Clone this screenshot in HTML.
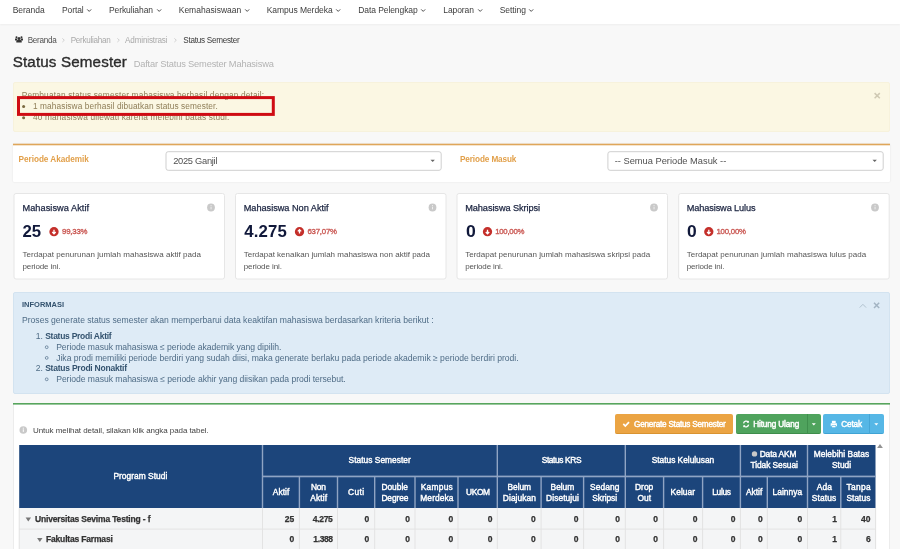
<!DOCTYPE html>
<html><head><meta charset="utf-8">
<style>
*{box-sizing:border-box;margin:0;padding:0}
html,body{width:900px;height:549px;overflow:hidden}
body{background:#f8f8f8;font-family:"Liberation Sans",sans-serif;position:relative}
.t{position:absolute;white-space:nowrap}
.b{position:absolute}
svg{position:absolute;overflow:visible}
#wrap{background:#f8f8f8;position:absolute;left:0;top:0;width:900px;height:549px;overflow:hidden;will-change:transform}
</style></head><body><div id="wrap">
<div class="b" style="left:0px;top:0px;width:900px;height:24px;background:#fff;box-shadow:0 1px 2px rgba(0,0,0,.045)"></div>
<div class="t" style="left:12.70px;top:5.00px;font-size:8.5px;line-height:10px;letter-spacing:-0.025px;color:#3c3c3c;font-weight:400;">Beranda</div>
<div class="t" style="left:62.00px;top:5.00px;font-size:8.5px;line-height:10px;letter-spacing:-0.101px;color:#3c3c3c;font-weight:400;">Portal</div>
<div class="t" style="left:109.00px;top:5.00px;font-size:8.5px;line-height:10px;letter-spacing:-0.090px;color:#3c3c3c;font-weight:400;">Perkuliahan</div>
<div class="t" style="left:178.70px;top:5.00px;font-size:8.5px;line-height:10px;letter-spacing:0.019px;color:#3c3c3c;font-weight:400;">Kemahasiswaan</div>
<div class="t" style="left:266.70px;top:5.00px;font-size:8.5px;line-height:10px;letter-spacing:-0.048px;color:#3c3c3c;font-weight:400;">Kampus Merdeka</div>
<div class="t" style="left:358.30px;top:5.00px;font-size:8.5px;line-height:10px;letter-spacing:-0.085px;color:#3c3c3c;font-weight:400;">Data Pelengkap</div>
<div class="t" style="left:443.30px;top:5.00px;font-size:8.5px;line-height:10px;letter-spacing:-0.083px;color:#3c3c3c;font-weight:400;">Laporan</div>
<div class="t" style="left:499.70px;top:5.00px;font-size:8.5px;line-height:10px;letter-spacing:-0.026px;color:#3c3c3c;font-weight:400;">Setting</div>
<svg style="left:86.8px;top:9.1px" width="4.4" height="3"><path d="M0.2 0.4 L2.2 2.4 L4.2 0.4" fill="none" stroke="#444" stroke-width="0.95"/></svg>
<svg style="left:156.8px;top:9.1px" width="4.4" height="3"><path d="M0.2 0.4 L2.2 2.4 L4.2 0.4" fill="none" stroke="#444" stroke-width="0.95"/></svg>
<svg style="left:244.8px;top:9.1px" width="4.4" height="3"><path d="M0.2 0.4 L2.2 2.4 L4.2 0.4" fill="none" stroke="#444" stroke-width="0.95"/></svg>
<svg style="left:335.8px;top:9.1px" width="4.4" height="3"><path d="M0.2 0.4 L2.2 2.4 L4.2 0.4" fill="none" stroke="#444" stroke-width="0.95"/></svg>
<svg style="left:421.1px;top:9.1px" width="4.4" height="3"><path d="M0.2 0.4 L2.2 2.4 L4.2 0.4" fill="none" stroke="#444" stroke-width="0.95"/></svg>
<svg style="left:477.5px;top:9.1px" width="4.4" height="3"><path d="M0.2 0.4 L2.2 2.4 L4.2 0.4" fill="none" stroke="#444" stroke-width="0.95"/></svg>
<svg style="left:529.0999999999999px;top:9.1px" width="4.4" height="3"><path d="M0.2 0.4 L2.2 2.4 L4.2 0.4" fill="none" stroke="#444" stroke-width="0.95"/></svg>
<svg style="left:15.2px;top:36.2px" width="8" height="7" viewBox="0 0 8 7"><g fill="#333"><circle cx="1.5" cy="1.3" r="1"/><circle cx="6.5" cy="1.3" r="1"/><circle cx="4" cy="2.4" r="1.5"/><path d="M0 2.6h2.2v2H0.6Q0 4.6 0 4z"/><path d="M8 2.6h-2.2v2h1.6Q8 4.6 8 4z"/><path d="M1.3 6.6V5.4Q1.3 4.1 2.6 4.1h2.8Q6.7 4.1 6.7 5.4v1.2z"/></g></svg>
<div class="t" style="left:27.70px;top:36.00px;font-size:8.15px;line-height:9px;letter-spacing:-0.255px;color:#505050;font-weight:400;">Beranda</div>
<div class="t" style="left:70.70px;top:36.00px;font-size:8.15px;line-height:9px;letter-spacing:-0.275px;color:#a9a9a9;font-weight:400;">Perkuliahan</div>
<div class="t" style="left:125.00px;top:36.00px;font-size:8.15px;line-height:9px;letter-spacing:-0.152px;color:#a9a9a9;font-weight:400;">Administrasi</div>
<div class="t" style="left:183.30px;top:36.00px;font-size:8.15px;line-height:9px;letter-spacing:-0.253px;color:#3a3a3a;font-weight:400;">Status Semester</div>
<svg style="left:62.4px;top:38.1px" width="3" height="5"><path d="M0.4 0.4 L2.3 2.2 L0.4 4" fill="none" stroke="#c2c2c2" stroke-width="0.75"/></svg>
<svg style="left:116.9px;top:38.1px" width="3" height="5"><path d="M0.4 0.4 L2.3 2.2 L0.4 4" fill="none" stroke="#c2c2c2" stroke-width="0.75"/></svg>
<svg style="left:173.9px;top:38.1px" width="3" height="5"><path d="M0.4 0.4 L2.3 2.2 L0.4 4" fill="none" stroke="#c2c2c2" stroke-width="0.75"/></svg>
<div class="t" style="left:12.70px;top:53.00px;font-size:15.2px;line-height:17px;letter-spacing:0.138px;color:#2c2c2c;font-weight:400;-webkit-text-stroke:.35px #2c2c2c;">Status Semester</div>
<div class="t" style="left:133.70px;top:59.00px;font-size:9.3px;line-height:10px;letter-spacing:-0.177px;color:#b3b3b3;font-weight:400;">Daftar Status Semester Mahasiswa</div>
<div class="b" style="left:13px;top:82px;width:877px;height:50px;background:#fbf7e3;border:1px solid #f7f2dc;border-radius:2px"></div>
<div class="t" style="left:21.80px;top:90.00px;font-size:8.3px;line-height:10px;letter-spacing:0.162px;color:#8e7d57;font-weight:400;">Pembuatan status semester mahasiswa berhasil dengan detail:</div>
<div class="t" style="left:33.00px;top:101.00px;font-size:8.3px;line-height:10px;letter-spacing:0.086px;color:#8e7d57;font-weight:400;">1 mahasiswa berhasil dibuatkan status semester.</div>
<div class="t" style="left:33.00px;top:112.00px;font-size:8.3px;line-height:10px;letter-spacing:0.157px;color:#8e7d57;font-weight:400;">40 mahasiswa dilewati karena melebihi batas studi.</div>
<svg style="left:0;top:0" width="900" height="140"><circle cx="23.6" cy="106.4" r="1.5" fill="#7a6940"/><circle cx="23.6" cy="117.7" r="1.5" fill="#7a6940"/><path d="M874.6 93.1l5.2 5.2m0-5.2l-5.2 5.2" stroke="#cfc9b3" stroke-width="1.5" fill="none"/><rect x="18.5" y="97.6" width="254.8" height="16.8" fill="none" stroke="#cf0c13" stroke-width="3"/></svg>
<div class="b" style="left:13px;top:144px;width:877px;height:37.5px;background:#fff;box-shadow:0 0 2px rgba(0,0,0,.10);border-radius:1px"></div>
<svg style="left:0;top:0" width="900" height="150"><rect x="13" y="143.7" width="877" height="1.6" fill="#dfa65a"/></svg>
<div class="t" style="left:18.50px;top:155.00px;font-size:8.2px;line-height:9px;letter-spacing:-0.020px;color:#e2a04a;font-weight:700;">Periode Akademik</div>
<div class="t" style="left:460.00px;top:155.00px;font-size:8.2px;line-height:9px;letter-spacing:-0.116px;color:#e2a04a;font-weight:700;">Periode Masuk</div>
<svg style="left:0;top:0" width="900" height="180"><rect x="166.0" y="151.7" width="275.2" height="18.6" rx="2.2" fill="#fff" stroke="#cfcfcf" stroke-width="1"/><path d="M430.5 159.7h4.4l-2.2 2.3z" fill="#666"/></svg>
<svg style="left:0;top:0" width="900" height="180"><rect x="607.9" y="151.7" width="275.30000000000007" height="18.6" rx="2.2" fill="#fff" stroke="#cfcfcf" stroke-width="1"/><path d="M872.5 159.7h4.4l-2.2 2.3z" fill="#666"/></svg>
<div class="t" style="left:173.20px;top:156.00px;font-size:9.3px;line-height:10px;letter-spacing:-0.276px;color:#505050;font-weight:400;">2025 Ganjil</div>
<div class="t" style="left:614.70px;top:156.00px;font-size:9.3px;line-height:10px;letter-spacing:-0.002px;color:#505050;font-weight:400;">-- Semua Periode Masuk --</div>
<svg style="left:0;top:0" width="900" height="285"><rect x="14.0" y="193.5" width="210.5" height="85.5" rx="2" fill="#fff" stroke="#e6e6e6" stroke-width="1"/><circle cx="211" cy="207.5" r="3.9" fill="#c9c9c9"/><rect x="210.6" y="206.7" width=".9" height="2.6" fill="#f2f2f2"/><rect x="210.6" y="205.1" width=".9" height=".9" fill="#f2f2f2"/><circle cx="54.0" cy="231.7" r="4.65" fill="#c42f2a"/><path d="M54.0 229.8v3.4M52.300000000000004 232l1.7 1.8l1.7 -1.8" stroke="#fff" stroke-width="1.3" fill="none"/></svg>
<div class="t" style="left:22.50px;top:203.00px;font-size:9.2px;line-height:10px;letter-spacing:0.051px;color:#1b2440;font-weight:400;-webkit-text-stroke:.25px #1b2440;">Mahasiswa Aktif</div>
<div class="t" style="left:22.51px;top:222.00px;font-size:16.8px;line-height:19px;letter-spacing:0.000px;color:#10183a;font-weight:700;">25</div>
<div class="t" style="left:62.00px;top:227.00px;font-size:7.8px;line-height:9px;letter-spacing:-0.192px;color:#cb5b56;font-weight:400;-webkit-text-stroke:.35px #cb5b56;">99,33%</div>
<div class="t" style="left:22.50px;top:250.00px;font-size:8.0px;line-height:9px;letter-spacing:0.043px;color:#555;font-weight:400;">Terdapat penurunan jumlah mahasiswa aktif pada</div>
<div class="t" style="left:22.50px;top:262.00px;font-size:8.0px;line-height:9px;letter-spacing:-0.104px;color:#555;font-weight:400;">periode ini.</div>
<svg style="left:0;top:0" width="900" height="285"><rect x="235.5" y="193.5" width="210.5" height="85.5" rx="2" fill="#fff" stroke="#e6e6e6" stroke-width="1"/><circle cx="432.5" cy="207.5" r="3.9" fill="#c9c9c9"/><rect x="432.1" y="206.7" width=".9" height="2.6" fill="#f2f2f2"/><rect x="432.1" y="205.1" width=".9" height=".9" fill="#f2f2f2"/><circle cx="299.5" cy="231.7" r="4.65" fill="#c42f2a"/><path d="M299.5 230.2v3.4M297.8 231.4l1.7 -1.8l1.7 1.8" stroke="#fff" stroke-width="1.3" fill="none"/></svg>
<div class="t" style="left:243.70px;top:203.00px;font-size:9.2px;line-height:10px;letter-spacing:-0.023px;color:#1b2440;font-weight:400;-webkit-text-stroke:.25px #1b2440;">Mahasiswa Non Aktif</div>
<div class="t" style="left:244.20px;top:222.00px;font-size:16.8px;line-height:19px;letter-spacing:0.190px;color:#10183a;font-weight:700;">4.275</div>
<div class="t" style="left:307.50px;top:227.00px;font-size:7.8px;line-height:9px;letter-spacing:-0.215px;color:#cb5b56;font-weight:400;-webkit-text-stroke:.35px #cb5b56;">637,07%</div>
<div class="t" style="left:243.70px;top:250.00px;font-size:8.0px;line-height:9px;letter-spacing:0.008px;color:#555;font-weight:400;">Terdapat kenaikan jumlah mahasiswa non aktif pada</div>
<div class="t" style="left:243.70px;top:262.00px;font-size:8.0px;line-height:9px;letter-spacing:-0.076px;color:#555;font-weight:400;">periode ini.</div>
<svg style="left:0;top:0" width="900" height="285"><rect x="457.0" y="193.5" width="210.5" height="85.5" rx="2" fill="#fff" stroke="#e6e6e6" stroke-width="1"/><circle cx="654" cy="207.5" r="3.9" fill="#c9c9c9"/><rect x="653.6" y="206.7" width=".9" height="2.6" fill="#f2f2f2"/><rect x="653.6" y="205.1" width=".9" height=".9" fill="#f2f2f2"/><circle cx="487.5" cy="231.7" r="4.65" fill="#c42f2a"/><path d="M487.5 229.8v3.4M485.8 232l1.7 1.8l1.7 -1.8" stroke="#fff" stroke-width="1.3" fill="none"/></svg>
<div class="t" style="left:465.20px;top:203.00px;font-size:9.2px;line-height:10px;letter-spacing:-0.073px;color:#1b2440;font-weight:400;-webkit-text-stroke:.25px #1b2440;">Mahasiswa Skripsi</div>
<div class="t" style="left:465.70px;top:222.00px;font-size:16.8px;line-height:19px;letter-spacing:0.000px;color:#10183a;font-weight:700;transform:scaleX(1.051);transform-origin:0 0;">0</div>
<div class="t" style="left:495.20px;top:227.00px;font-size:7.8px;line-height:9px;letter-spacing:-0.248px;color:#cb5b56;font-weight:400;-webkit-text-stroke:.35px #cb5b56;">100,00%</div>
<div class="t" style="left:465.20px;top:250.00px;font-size:8.0px;line-height:9px;letter-spacing:0.009px;color:#555;font-weight:400;">Terdapat penurunan jumlah mahasiswa skripsi pada</div>
<div class="t" style="left:465.20px;top:262.00px;font-size:8.0px;line-height:9px;letter-spacing:-0.122px;color:#555;font-weight:400;">periode ini.</div>
<svg style="left:0;top:0" width="900" height="285"><rect x="678.7" y="193.5" width="210.5" height="85.5" rx="2" fill="#fff" stroke="#e6e6e6" stroke-width="1"/><circle cx="875" cy="207.5" r="3.9" fill="#c9c9c9"/><rect x="874.6" y="206.7" width=".9" height="2.6" fill="#f2f2f2"/><rect x="874.6" y="205.1" width=".9" height=".9" fill="#f2f2f2"/><circle cx="708.8" cy="231.7" r="4.65" fill="#c42f2a"/><path d="M708.8 229.8v3.4M707.1 232l1.7 1.8l1.7 -1.8" stroke="#fff" stroke-width="1.3" fill="none"/></svg>
<div class="t" style="left:686.70px;top:203.00px;font-size:9.2px;line-height:10px;letter-spacing:-0.112px;color:#1b2440;font-weight:400;-webkit-text-stroke:.25px #1b2440;">Mahasiswa Lulus</div>
<div class="t" style="left:687.00px;top:222.00px;font-size:16.8px;line-height:19px;letter-spacing:0.000px;color:#10183a;font-weight:700;transform:scaleX(1.040);transform-origin:0 0;">0</div>
<div class="t" style="left:716.50px;top:227.00px;font-size:7.8px;line-height:9px;letter-spacing:-0.215px;color:#cb5b56;font-weight:400;-webkit-text-stroke:.35px #cb5b56;">100,00%</div>
<div class="t" style="left:686.70px;top:250.00px;font-size:8.0px;line-height:9px;letter-spacing:0.025px;color:#555;font-weight:400;">Terdapat penurunan jumlah mahasiswa lulus pada</div>
<div class="t" style="left:686.70px;top:262.00px;font-size:8.0px;line-height:9px;letter-spacing:-0.122px;color:#555;font-weight:400;">periode ini.</div>
<div class="b" style="left:13px;top:292px;width:877px;height:102px;background:#deebf6;border:1px solid #d3e3f0;border-radius:2px"></div>
<div class="t" style="left:22.00px;top:300.00px;font-size:7.5px;line-height:9px;letter-spacing:-0.009px;color:#34536f;font-weight:700;">INFORMASI</div>
<div class="t" style="left:22.00px;top:315.00px;font-size:8.6px;line-height:10px;letter-spacing:-0.010px;color:#4f6c86;font-weight:400;">Proses generate status semester akan memperbarui data keaktifan mahasiswa berdasarkan kriteria berikut :</div>
<div class="t" style="left:35.82px;top:331.00px;font-size:8.6px;line-height:10px;letter-spacing:0.000px;color:#4f6c86;font-weight:400;">1.</div>
<div class="t" style="left:45.20px;top:331.00px;font-size:8.5px;line-height:10px;letter-spacing:-0.266px;color:#34536f;font-weight:700;">Status Prodi Aktif</div>
<div class="t" style="left:56.20px;top:342.00px;font-size:8.6px;line-height:10px;letter-spacing:-0.048px;color:#4f6c86;font-weight:400;">Periode masuk mahasiswa ≤ periode akademik yang dipilih.</div>
<div class="t" style="left:56.20px;top:353.00px;font-size:8.6px;line-height:10px;letter-spacing:-0.015px;color:#4f6c86;font-weight:400;">Jika prodi memiliki periode berdiri yang sudah diisi, maka generate berlaku pada periode akademik ≥ periode berdiri prodi.</div>
<div class="t" style="left:35.82px;top:363.00px;font-size:8.6px;line-height:10px;letter-spacing:0.000px;color:#4f6c86;font-weight:400;">2.</div>
<div class="t" style="left:45.20px;top:363.00px;font-size:8.5px;line-height:10px;letter-spacing:-0.232px;color:#34536f;font-weight:700;">Status Prodi Nonaktif</div>
<div class="t" style="left:56.20px;top:374.00px;font-size:8.6px;line-height:10px;letter-spacing:-0.044px;color:#4f6c86;font-weight:400;">Periode masuk mahasiswa ≤ periode akhir yang diisikan pada prodi tersebut.</div>
<svg style="left:0;top:0" width="900" height="400"><g fill="none" stroke="#4f6c86" stroke-width=".7"><circle cx="46.7" cy="347.2" r="1.4"/><circle cx="46.7" cy="357.9" r="1.4"/><circle cx="46.7" cy="379.3" r="1.4"/></g><path d="M859.7 307.6l3.2-3.3l3.2 3.3" stroke="#adbecc" stroke-width="0.9" fill="none"/><path d="M874 302.8l5.2 5.2m0-5.2l-5.2 5.2" stroke="#a3b4c3" stroke-width="1.5" fill="none"/></svg>
<div class="b" style="left:13px;top:403px;width:877px;height:157px;background:#fff;border:1px solid #ececec;border-top:0"></div>
<svg style="left:0;top:0" width="900" height="410"><rect x="13" y="403" width="877" height="1.6" fill="#57a55d"/></svg>
<svg style="left:0;top:0" width="900" height="440"><circle cx="23.3" cy="430" r="3.8" fill="#c9c9c9"/><rect x="22.8" y="429.3" width="1" height="2.6" fill="#fff"/><rect x="22.8" y="427.7" width="1" height="1" fill="#fff"/></svg>
<div class="t" style="left:33.00px;top:426.00px;font-size:8.0px;line-height:9px;letter-spacing:-0.069px;color:#444;font-weight:400;">Untuk melihat detail, silakan klik angka pada tabel.</div>
<div class="b" style="left:615px;top:414px;width:118px;height:20px;background:#eba443;border-bottom:1px solid #d99330;border-radius:2px"></div>
<div class="b" style="left:736px;top:414px;width:85px;height:20px;background:#4fa35d;border-bottom:1px solid #3e8d4b;border-radius:2px"></div>
<div class="b" style="left:806.5px;top:414px;width:1.0px;height:20px;background:#3f8f4d"></div>
<div class="b" style="left:823px;top:414px;width:61px;height:20px;background:#56b7e6;border-bottom:1px solid #3fa3d4;border-radius:2px"></div>
<div class="b" style="left:868.5px;top:414px;width:1.0px;height:20px;background:#45a6d6"></div>
<div class="t" style="left:634.00px;top:420.00px;font-size:8.2px;line-height:9px;letter-spacing:-0.226px;color:#fff;font-weight:400;-webkit-text-stroke:.45px #fff;">Generate Status Semester</div>
<div class="t" style="left:753.20px;top:420.00px;font-size:8.2px;line-height:9px;letter-spacing:-0.120px;color:#fff;font-weight:400;-webkit-text-stroke:.45px #fff;">Hitung Ulang</div>
<div class="t" style="left:841.20px;top:420.00px;font-size:8.2px;line-height:9px;letter-spacing:-0.111px;color:#fff;font-weight:400;-webkit-text-stroke:.45px #fff;">Cetak</div>
<svg style="left:0;top:0" width="900" height="440"><path d="M623.3 423.9l2 2.1l3.7 -3.9" stroke="#fff" stroke-width="1.7" fill="none"/><g fill="none" stroke="#fff" stroke-width="1.3"><path d="M743.6 423.4a2.6 2.6 0 0 1 4.7 -1.2"/><path d="M748.6 424.6a2.6 2.6 0 0 1 -4.7 1.2"/></g><path d="M748.9 420.6v2.2h-2.2zM743.3 427.4v-2.2h2.2z" fill="#fff"/><path d="M811.8 423.2h4l-2 2.2z" fill="#fff"/><path d="M874.3 423.2h4l-2 2.2z" fill="#fff"/><g fill="#fff"><rect x="831.9" y="420.8" width="3.8" height="2.2"/><path d="M830.7 423.3h6.2v3h-1v-1.2h-4.2v1.2h-1z"/><rect x="832.1" y="425.6" width="3.4" height="1.7"/></g></svg>
<svg style="left:0;top:0" width="900" height="549"><rect x="19.2" y="445" width="856.3" height="63" fill="#1c457b"/></svg>
<svg style="left:0;top:0" width="900" height="549"><rect x="261.8" y="445" width="1.4" height="63" fill="#8fa4c4"/><rect x="298.7" y="476.4" width="1.4" height="31.600000000000023" fill="#8fa4c4"/><rect x="336.8" y="476.4" width="1.4" height="31.600000000000023" fill="#8fa4c4"/><rect x="374.0" y="476.4" width="1.4" height="31.600000000000023" fill="#8fa4c4"/><rect x="414.3" y="476.4" width="1.4" height="31.600000000000023" fill="#8fa4c4"/><rect x="457.3" y="476.4" width="1.4" height="31.600000000000023" fill="#8fa4c4"/><rect x="496.6" y="445" width="1.4" height="63" fill="#8fa4c4"/><rect x="540.4" y="476.4" width="1.4" height="31.600000000000023" fill="#8fa4c4"/><rect x="582.9" y="476.4" width="1.4" height="31.600000000000023" fill="#8fa4c4"/><rect x="624.5999999999999" y="445" width="1.4" height="63" fill="#8fa4c4"/><rect x="662.9" y="476.4" width="1.4" height="31.600000000000023" fill="#8fa4c4"/><rect x="701.9" y="476.4" width="1.4" height="31.600000000000023" fill="#8fa4c4"/><rect x="739.6999999999999" y="445" width="1.4" height="63" fill="#8fa4c4"/><rect x="766.5999999999999" y="476.4" width="1.4" height="31.600000000000023" fill="#8fa4c4"/><rect x="806.8" y="445" width="1.4" height="63" fill="#8fa4c4"/><rect x="840.0999999999999" y="476.4" width="1.4" height="31.600000000000023" fill="#8fa4c4"/><rect x="262.5" y="475.6" width="613" height="1.7" fill="#8fa4c4"/><rect x="19" y="508" width="857" height="41" fill="#f4f5f6"/><rect x="18.7" y="508" width="1" height="41" fill="#e3e3e3"/><rect x="262.0" y="508" width="1" height="41" fill="#e3e3e3"/><rect x="298.9" y="508" width="1" height="41" fill="#e3e3e3"/><rect x="337.0" y="508" width="1" height="41" fill="#e3e3e3"/><rect x="374.2" y="508" width="1" height="41" fill="#e3e3e3"/><rect x="414.5" y="508" width="1" height="41" fill="#e3e3e3"/><rect x="457.5" y="508" width="1" height="41" fill="#e3e3e3"/><rect x="496.8" y="508" width="1" height="41" fill="#e3e3e3"/><rect x="540.6" y="508" width="1" height="41" fill="#e3e3e3"/><rect x="583.1" y="508" width="1" height="41" fill="#e3e3e3"/><rect x="624.8" y="508" width="1" height="41" fill="#e3e3e3"/><rect x="663.1" y="508" width="1" height="41" fill="#e3e3e3"/><rect x="702.1" y="508" width="1" height="41" fill="#e3e3e3"/><rect x="739.9" y="508" width="1" height="41" fill="#e3e3e3"/><rect x="766.8" y="508" width="1" height="41" fill="#e3e3e3"/><rect x="807.0" y="508" width="1" height="41" fill="#e3e3e3"/><rect x="840.3" y="508" width="1" height="41" fill="#e3e3e3"/><rect x="875.1" y="508" width="1" height="41" fill="#e3e3e3"/><rect x="19" y="528.6" width="857" height="1" fill="#e3e3e3"/><path d="M25.6 517.5h5.4l-2.7 4.1z" fill="#777"/><path d="M37.1 538h5.4l-2.7 4.1z" fill="#777"/><path d="M877.1 448h5.8l-2.9 -4.1z" fill="#929292"/><circle cx="754.5" cy="453.9" r="2.7" fill="#c9c9c9"/></svg>
<div class="t" style="left:113.40px;top:471.00px;font-size:8.4px;line-height:10px;letter-spacing:0.034px;color:#fff;font-weight:400;-webkit-text-stroke:.4px #fff;">Program Studi</div>
<div class="t" style="left:348.60px;top:455.00px;font-size:8.4px;line-height:10px;letter-spacing:0.022px;color:#fff;font-weight:400;-webkit-text-stroke:.4px #fff;">Status Semester</div>
<div class="t" style="left:541.70px;top:455.00px;font-size:8.4px;line-height:10px;letter-spacing:-0.381px;color:#fff;font-weight:400;-webkit-text-stroke:.4px #fff;">Status KRS</div>
<div class="t" style="left:651.70px;top:455.00px;font-size:8.4px;line-height:10px;letter-spacing:-0.023px;color:#fff;font-weight:400;-webkit-text-stroke:.4px #fff;">Status Kelulusan</div>
<div class="t" style="left:759.70px;top:449.00px;font-size:8.4px;line-height:10px;letter-spacing:-0.132px;color:#fff;font-weight:400;-webkit-text-stroke:.4px #fff;">Data AKM</div>
<div class="t" style="left:750.50px;top:460.00px;font-size:8.4px;line-height:10px;letter-spacing:-0.069px;color:#fff;font-weight:400;-webkit-text-stroke:.4px #fff;">Tidak Sesuai</div>
<div class="t" style="left:813.70px;top:449.00px;font-size:8.4px;line-height:10px;letter-spacing:0.038px;color:#fff;font-weight:400;-webkit-text-stroke:.4px #fff;">Melebihi Batas</div>
<div class="t" style="left:831.90px;top:460.00px;font-size:8.4px;line-height:10px;letter-spacing:0.037px;color:#fff;font-weight:400;-webkit-text-stroke:.4px #fff;">Studi</div>
<div class="t" style="left:272.80px;top:487.00px;font-size:8.4px;line-height:10px;letter-spacing:0.060px;color:#fff;font-weight:400;-webkit-text-stroke:.4px #fff;">Aktif</div>
<div class="t" style="left:311.00px;top:482.00px;font-size:8.4px;line-height:10px;letter-spacing:-0.207px;color:#fff;font-weight:400;-webkit-text-stroke:.4px #fff;">Non</div>
<div class="t" style="left:310.30px;top:493.00px;font-size:8.4px;line-height:10px;letter-spacing:0.135px;color:#fff;font-weight:400;-webkit-text-stroke:.4px #fff;">Aktif</div>
<div class="t" style="left:348.00px;top:487.00px;font-size:8.4px;line-height:10px;letter-spacing:0.423px;color:#fff;font-weight:400;-webkit-text-stroke:.4px #fff;">Cuti</div>
<div class="t" style="left:381.40px;top:482.00px;font-size:8.4px;line-height:10px;letter-spacing:-0.006px;color:#fff;font-weight:400;-webkit-text-stroke:.4px #fff;">Double</div>
<div class="t" style="left:381.40px;top:493.00px;font-size:8.4px;line-height:10px;letter-spacing:-0.070px;color:#fff;font-weight:400;-webkit-text-stroke:.4px #fff;">Degree</div>
<div class="t" style="left:420.80px;top:482.00px;font-size:8.4px;line-height:10px;letter-spacing:0.239px;color:#fff;font-weight:400;-webkit-text-stroke:.4px #fff;">Kampus</div>
<div class="t" style="left:420.30px;top:493.00px;font-size:8.4px;line-height:10px;letter-spacing:0.101px;color:#fff;font-weight:400;-webkit-text-stroke:.4px #fff;">Merdeka</div>
<div class="t" style="left:466.10px;top:487.00px;font-size:8.4px;line-height:10px;letter-spacing:-0.400px;color:#fff;font-weight:400;-webkit-text-stroke:.4px #fff;">UKOM</div>
<div class="t" style="left:507.50px;top:482.00px;font-size:8.4px;line-height:10px;letter-spacing:-0.053px;color:#fff;font-weight:400;-webkit-text-stroke:.4px #fff;">Belum</div>
<div class="t" style="left:502.80px;top:493.00px;font-size:8.4px;line-height:10px;letter-spacing:0.086px;color:#fff;font-weight:400;-webkit-text-stroke:.4px #fff;">Diajukan</div>
<div class="t" style="left:550.60px;top:482.00px;font-size:8.4px;line-height:10px;letter-spacing:-0.053px;color:#fff;font-weight:400;-webkit-text-stroke:.4px #fff;">Belum</div>
<div class="t" style="left:546.10px;top:493.00px;font-size:8.4px;line-height:10px;letter-spacing:0.073px;color:#fff;font-weight:400;-webkit-text-stroke:.4px #fff;">Disetujui</div>
<div class="t" style="left:590.00px;top:482.00px;font-size:8.4px;line-height:10px;letter-spacing:0.088px;color:#fff;font-weight:400;-webkit-text-stroke:.4px #fff;">Sedang</div>
<div class="t" style="left:592.20px;top:493.00px;font-size:8.4px;line-height:10px;letter-spacing:-0.033px;color:#fff;font-weight:400;-webkit-text-stroke:.4px #fff;">Skripsi</div>
<div class="t" style="left:635.00px;top:482.00px;font-size:8.4px;line-height:10px;letter-spacing:0.031px;color:#fff;font-weight:400;-webkit-text-stroke:.4px #fff;">Drop</div>
<div class="t" style="left:637.50px;top:493.00px;font-size:8.4px;line-height:10px;letter-spacing:0.028px;color:#fff;font-weight:400;-webkit-text-stroke:.4px #fff;">Out</div>
<div class="t" style="left:670.60px;top:487.00px;font-size:8.4px;line-height:10px;letter-spacing:0.025px;color:#fff;font-weight:400;-webkit-text-stroke:.4px #fff;">Keluar</div>
<div class="t" style="left:712.20px;top:487.00px;font-size:8.4px;line-height:10px;letter-spacing:-0.294px;color:#fff;font-weight:400;-webkit-text-stroke:.4px #fff;">Lulus</div>
<div class="t" style="left:745.90px;top:487.00px;font-size:8.4px;line-height:10px;letter-spacing:0.035px;color:#fff;font-weight:400;-webkit-text-stroke:.4px #fff;">Aktif</div>
<div class="t" style="left:772.50px;top:487.00px;font-size:8.4px;line-height:10px;letter-spacing:0.060px;color:#fff;font-weight:400;-webkit-text-stroke:.4px #fff;">Lainnya</div>
<div class="t" style="left:816.70px;top:482.00px;font-size:8.4px;line-height:10px;letter-spacing:0.124px;color:#fff;font-weight:400;-webkit-text-stroke:.4px #fff;">Ada</div>
<div class="t" style="left:811.80px;top:493.00px;font-size:8.4px;line-height:10px;letter-spacing:0.117px;color:#fff;font-weight:400;-webkit-text-stroke:.4px #fff;">Status</div>
<div class="t" style="left:846.50px;top:482.00px;font-size:8.4px;line-height:10px;letter-spacing:0.328px;color:#fff;font-weight:400;-webkit-text-stroke:.4px #fff;">Tanpa</div>
<div class="t" style="left:846.50px;top:493.00px;font-size:8.4px;line-height:10px;letter-spacing:0.017px;color:#fff;font-weight:400;-webkit-text-stroke:.4px #fff;">Status</div>
<div class="t" style="left:35.00px;top:514.00px;font-size:8.5px;line-height:10px;letter-spacing:-0.166px;color:#333;font-weight:700;-webkit-text-stroke:.25px #333;">Universitas Sevima Testing - f</div>
<div class="t" style="left:46.00px;top:534.00px;font-size:8.5px;line-height:10px;letter-spacing:-0.176px;color:#333;font-weight:700;-webkit-text-stroke:.25px #333;">Fakultas Farmasi</div>
<div class="t" style="left:284.87px;top:514.00px;font-size:8.5px;line-height:10px;letter-spacing:0.000px;color:#333;font-weight:700;-webkit-text-stroke:.25px #333;">25</div>
<div class="t" style="left:312.80px;top:514.00px;font-size:8.5px;line-height:10px;letter-spacing:-0.318px;color:#333;font-weight:700;-webkit-text-stroke:.25px #333;">4.275</div>
<div class="t" style="left:364.44px;top:514.00px;font-size:8.5px;line-height:10px;letter-spacing:0.000px;color:#333;font-weight:700;-webkit-text-stroke:.25px #333;">0</div>
<div class="t" style="left:405.24px;top:514.00px;font-size:8.5px;line-height:10px;letter-spacing:0.000px;color:#333;font-weight:700;-webkit-text-stroke:.25px #333;">0</div>
<div class="t" style="left:448.54px;top:514.00px;font-size:8.5px;line-height:10px;letter-spacing:0.000px;color:#333;font-weight:700;-webkit-text-stroke:.25px #333;">0</div>
<div class="t" style="left:487.74px;top:514.00px;font-size:8.5px;line-height:10px;letter-spacing:0.000px;color:#333;font-weight:700;-webkit-text-stroke:.25px #333;">0</div>
<div class="t" style="left:531.04px;top:514.00px;font-size:8.5px;line-height:10px;letter-spacing:0.000px;color:#333;font-weight:700;-webkit-text-stroke:.25px #333;">0</div>
<div class="t" style="left:573.84px;top:514.00px;font-size:8.5px;line-height:10px;letter-spacing:0.000px;color:#333;font-weight:700;-webkit-text-stroke:.25px #333;">0</div>
<div class="t" style="left:615.24px;top:514.00px;font-size:8.5px;line-height:10px;letter-spacing:0.000px;color:#333;font-weight:700;-webkit-text-stroke:.25px #333;">0</div>
<div class="t" style="left:653.24px;top:514.00px;font-size:8.5px;line-height:10px;letter-spacing:0.000px;color:#333;font-weight:700;-webkit-text-stroke:.25px #333;">0</div>
<div class="t" style="left:692.74px;top:514.00px;font-size:8.5px;line-height:10px;letter-spacing:0.000px;color:#333;font-weight:700;-webkit-text-stroke:.25px #333;">0</div>
<div class="t" style="left:730.84px;top:514.00px;font-size:8.5px;line-height:10px;letter-spacing:0.000px;color:#333;font-weight:700;-webkit-text-stroke:.25px #333;">0</div>
<div class="t" style="left:757.94px;top:514.00px;font-size:8.5px;line-height:10px;letter-spacing:0.000px;color:#333;font-weight:700;-webkit-text-stroke:.25px #333;">0</div>
<div class="t" style="left:797.54px;top:514.00px;font-size:8.5px;line-height:10px;letter-spacing:0.000px;color:#333;font-weight:700;-webkit-text-stroke:.25px #333;">0</div>
<div class="t" style="left:832.34px;top:514.00px;font-size:8.5px;line-height:10px;letter-spacing:0.000px;color:#333;font-weight:700;-webkit-text-stroke:.25px #333;">1</div>
<div class="t" style="left:861.07px;top:514.00px;font-size:8.5px;line-height:10px;letter-spacing:0.000px;color:#333;font-weight:700;-webkit-text-stroke:.25px #333;">40</div>
<div class="t" style="left:289.44px;top:534.00px;font-size:8.5px;line-height:10px;letter-spacing:0.000px;color:#333;font-weight:700;-webkit-text-stroke:.25px #333;">0</div>
<div class="t" style="left:313.36px;top:534.00px;font-size:8.5px;line-height:10px;letter-spacing:-0.400px;color:#333;font-weight:700;-webkit-text-stroke:.25px #333;">1.388</div>
<div class="t" style="left:364.44px;top:534.00px;font-size:8.5px;line-height:10px;letter-spacing:0.000px;color:#333;font-weight:700;-webkit-text-stroke:.25px #333;">0</div>
<div class="t" style="left:405.24px;top:534.00px;font-size:8.5px;line-height:10px;letter-spacing:0.000px;color:#333;font-weight:700;-webkit-text-stroke:.25px #333;">0</div>
<div class="t" style="left:448.54px;top:534.00px;font-size:8.5px;line-height:10px;letter-spacing:0.000px;color:#333;font-weight:700;-webkit-text-stroke:.25px #333;">0</div>
<div class="t" style="left:487.74px;top:534.00px;font-size:8.5px;line-height:10px;letter-spacing:0.000px;color:#333;font-weight:700;-webkit-text-stroke:.25px #333;">0</div>
<div class="t" style="left:531.04px;top:534.00px;font-size:8.5px;line-height:10px;letter-spacing:0.000px;color:#333;font-weight:700;-webkit-text-stroke:.25px #333;">0</div>
<div class="t" style="left:573.84px;top:534.00px;font-size:8.5px;line-height:10px;letter-spacing:0.000px;color:#333;font-weight:700;-webkit-text-stroke:.25px #333;">0</div>
<div class="t" style="left:615.24px;top:534.00px;font-size:8.5px;line-height:10px;letter-spacing:0.000px;color:#333;font-weight:700;-webkit-text-stroke:.25px #333;">0</div>
<div class="t" style="left:653.24px;top:534.00px;font-size:8.5px;line-height:10px;letter-spacing:0.000px;color:#333;font-weight:700;-webkit-text-stroke:.25px #333;">0</div>
<div class="t" style="left:692.74px;top:534.00px;font-size:8.5px;line-height:10px;letter-spacing:0.000px;color:#333;font-weight:700;-webkit-text-stroke:.25px #333;">0</div>
<div class="t" style="left:730.84px;top:534.00px;font-size:8.5px;line-height:10px;letter-spacing:0.000px;color:#333;font-weight:700;-webkit-text-stroke:.25px #333;">0</div>
<div class="t" style="left:757.94px;top:534.00px;font-size:8.5px;line-height:10px;letter-spacing:0.000px;color:#333;font-weight:700;-webkit-text-stroke:.25px #333;">0</div>
<div class="t" style="left:797.54px;top:534.00px;font-size:8.5px;line-height:10px;letter-spacing:0.000px;color:#333;font-weight:700;-webkit-text-stroke:.25px #333;">0</div>
<div class="t" style="left:832.34px;top:534.00px;font-size:8.5px;line-height:10px;letter-spacing:0.000px;color:#333;font-weight:700;-webkit-text-stroke:.25px #333;">1</div>
<div class="t" style="left:865.94px;top:534.00px;font-size:8.5px;line-height:10px;letter-spacing:0.000px;color:#333;font-weight:700;-webkit-text-stroke:.25px #333;">6</div>
</div></body></html>
